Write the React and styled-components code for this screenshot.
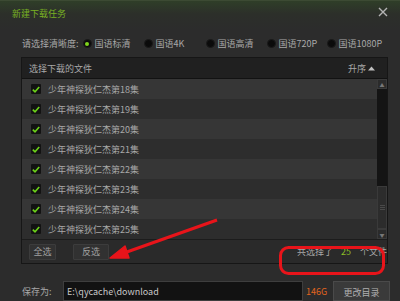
import React from "react";
import styled, { createGlobalStyle } from "styled-components";

const Global = createGlobalStyle`
  html, body { margin: 0; padding: 0; background: #2b2b2b; }
  body { overflow: hidden; }
`;

const font = `"Noto Sans CJK SC", "Noto Sans", sans-serif`;

const Window = styled.div`
  position: relative;
  width: 400px;
  height: 301px;
  overflow: hidden;
  background: #2c2c2c;
  font-family: ${font};
  font-size: 9px;
  color: #a8a8a8;
  display: flex;
  flex-direction: column;
`;

const TitleBar = styled.div`
  height: 30px;
  flex: none;
  display: flex;
  align-items: center;
  justify-content: space-between;
  padding: 0 12px 5px 12px;
  box-sizing: border-box;
  background: linear-gradient(#2f3e28 0%, #2c2f2a 45%, #2c2c2c 100%);
  border-top: 1px solid #3c4a33;
`;

const Title = styled.div`
  color: #78b023;
  font-size: 9px;
`;

const Close = styled.svg`
  width: 10px;
  height: 10px;
  margin-top: -2px;
`;

const QualityRow = styled.div`
  height: 22px;
  margin-top: 6px;
  padding-left: 22px;
  display: flex;
  align-items: center;
`;

const Label = styled.span`
  margin-right: 4px;
  color: #a8a8a8;
`;

const Option = styled.span`
  display: inline-flex;
  align-items: center;
  gap: 3px;
  width: ${(p) => p.w}px;
`;

const Radio = styled.span`
  width: 9px;
  height: 9px;
  border-radius: 50%;
  background: #0b0b0b;
  border: 1px solid #1a1a1a;
  box-sizing: border-box;
  display: flex;
  align-items: center;
  justify-content: center;
  &::after {
    content: "";
    width: 4px;
    height: 4px;
    border-radius: 50%;
    background: ${(p) => (p.on ? "#7fd41c" : "transparent")};
  }
`;

const Panel = styled.div`
  margin: 6px 12px 0 21px;
  border: 1px solid #161616;
  display: flex;
  flex-direction: column;
`;

const Header = styled.div`
  height: 21px;
  background: #202020;
  display: flex;
  align-items: center;
  justify-content: space-between;
  padding: 0 12px 0 7px;
  border-bottom: 1px solid #121212;
  box-sizing: border-box;
`;

const Sort = styled.span`
  display: flex;
  align-items: center;
  gap: 2px;
`;

const ListArea = styled.div`
  display: flex;
  height: 160px;
`;

const List = styled.div`
  flex: 1;
  display: flex;
  flex-direction: column;
`;

const Row = styled.div`
  height: 20px;
  flex: none;
  display: flex;
  align-items: center;
  padding-left: 9px;
  gap: 7px;
  background: ${(p) => (p.odd ? "#2d2d2d" : "#363636")};
`;

const Check = styled.span`
  width: 10px;
  height: 10px;
  background: #121212;
  border-radius: 1px;
  display: flex;
  align-items: center;
  justify-content: center;
`;

const ScrollBar = styled.div`
  width: 10px;
  background: #141414;
  display: flex;
  flex-direction: column;
`;

const ScrollBtn = styled.div`
  height: 10px;
  background: #2b2b2b;
  border: 1px solid #3a3a3a;
  box-sizing: border-box;
  display: flex;
  align-items: center;
  justify-content: center;
  color: #777;
  font-size: 5px;
`;

const Track = styled.div`
  flex: 1;
  display: flex;
  flex-direction: column;
  justify-content: flex-end;
`;

const Thumb = styled.div`
  height: 43px;
  background: #2c2c2c;
  border: 1px solid #3a3a3a;
  box-sizing: border-box;
  display: flex;
  flex-direction: column;
  align-items: center;
  justify-content: center;
  gap: 1px;
  & > i {
    width: 5px;
    height: 1px;
    background: #4a4a4a;
  }
`;

const Footer = styled.div`
  height: 23px;
  border-top: 1px solid #1c1c1c;
  background: #2a2a2a;
  display: flex;
  align-items: center;
  padding-left: 7px;
  gap: 17px;
`;

const Btn = styled.div`
  width: ${(p) => p.w}px;
  height: 16px;
  box-sizing: border-box;
  background: #313131;
  border: 1px solid #3c3c3c;
  border-radius: 1px;
  display: flex;
  align-items: center;
  justify-content: center;
  color: #a0a0a0;
`;

const Count = styled.div`
  margin-left: auto;
  padding-right: 2px;
  display: flex;
  align-items: center;
  white-space: nowrap;
  overflow: hidden;
  width: 88px;
`;

const Num = styled.span`
  color: #8cbf26;
  margin: 0 9px 0 8px;
`;

const SaveRow = styled.div`
  margin-top: 17px;
  padding-left: 22px;
  display: flex;
  align-items: flex-start;
`;

const SaveLabel = styled.span`
  width: 41px;
  margin-top: 4px;
`;

const PathInput = styled.div`
  width: 240px;
  height: 20px;
  background: #121212;
  border: 1px solid #3e3e3e;
  box-sizing: border-box;
  padding: 3px 0 0 3px;
  color: #c8c8c8;
`;

const Free = styled.span`
  width: 30px;
  margin-top: 4px;
  padding-left: 3px;
  color: #e2641e;
  box-sizing: border-box;
`;

const DirBtn = styled.div`
  width: 57px;
  height: 20px;
  box-sizing: border-box;
  background: #3a3a3a;
  border: 1px solid #4a4a4a;
  padding-top: 4px;
  text-align: center;
  color: #b0b0b0;
`;

const Mark = styled.svg`
  position: absolute;
  left: 0;
  top: 0;
  width: 400px;
  height: 301px;
  pointer-events: none;
`;

const episodes = [18, 19, 20, 21, 22, 23, 24, 25];
const options = [
  { t: "国语标清", w: 61, on: true },
  { t: "国语4K", w: 62 },
  { t: "国语高清", w: 61 },
  { t: "国语720P", w: 60 },
  { t: "国语1080P", w: 56 },
];

export default function App() {
  return (
    <Window>
      <Global />
      <TitleBar>
        <Title>新建下载任务</Title>
        <Close viewBox="0 0 10 10">
          <path d="M1 1L9 9M9 1L1 9" stroke="#b4b4b4" strokeWidth="1.4" />
        </Close>
      </TitleBar>
      <QualityRow>
        <Label>请选择清晰度:</Label>
        {options.map((o) => (
          <Option key={o.t} w={o.w}>
            <Radio on={o.on} />
            {o.t}
          </Option>
        ))}
      </QualityRow>
      <Panel>
        <Header>
          <span>选择下载的文件</span>
          <Sort>
            升序
            <svg width="7" height="5" viewBox="0 0 7 5">
              <path d="M0 4.5L3.5 0.5L7 4.5Z" fill="#c0c0c0" />
            </svg>
          </Sort>
        </Header>
        <ListArea>
          <List>
            {episodes.map((n, i) => (
              <Row key={n} odd={i % 2 === 1}>
                <Check>
                  <svg width="8" height="7" viewBox="0 0 8 7">
                    <path d="M0.8 3.6L3 5.8L7.2 1" stroke="#6cd21a" strokeWidth="1.6" fill="none" />
                  </svg>
                </Check>
                少年神探狄仁杰第{n}集
              </Row>
            ))}
          </List>
          <ScrollBar>
            <ScrollBtn>▲</ScrollBtn>
            <Track>
              <Thumb>
                <i />
                <i />
                <i />
              </Thumb>
            </Track>
            <ScrollBtn>▼</ScrollBtn>
          </ScrollBar>
        </ListArea>
        <Footer>
          <Btn w={27}>全选</Btn>
          <Btn w={36}>反选</Btn>
          <Count>
            共选择了<Num>25</Num>个文件
          </Count>
        </Footer>
      </Panel>
      <SaveRow>
        <SaveLabel>保存为:</SaveLabel>
        <PathInput>E:\qycache\download</PathInput>
        <Free>146G</Free>
        <DirBtn>更改目录</DirBtn>
      </SaveRow>
      <Mark viewBox="0 0 400 301">
        <path d="M217 220L124 253" stroke="#e8141a" strokeWidth="3" />
        <path d="M110 258L125 246L129 258Z" fill="#e8141a" stroke="#e8141a" strokeWidth="1.5" strokeLinejoin="round" />
        <rect x="280.5" y="247.5" width="103" height="26" rx="8" fill="none" stroke="#e8141a" strokeWidth="3" />
      </Mark>
    </Window>
  );
}
